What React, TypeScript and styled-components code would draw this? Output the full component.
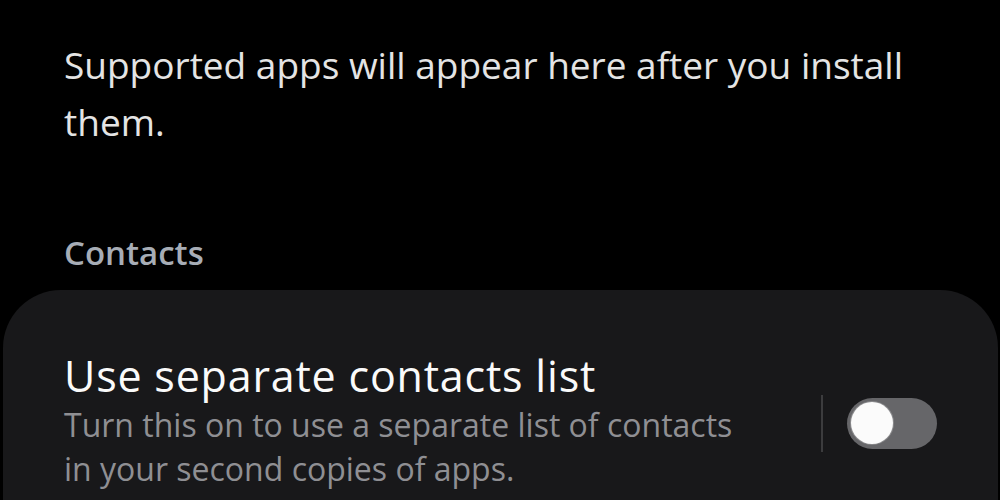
import React, { useState } from "react";
import styled, { createGlobalStyle } from "styled-components";

const GlobalStyle = createGlobalStyle`
  html, body {
    margin: 0;
    padding: 0;
    background: #000;
  }
  body {
    font-family: "Open Sans", "Noto Sans", sans-serif;
    overflow: hidden;
  }
`;

export default function App() {
  const [enabled, setEnabled] = useState(false);

  return (
    <Page>
      <GlobalStyle />
      <Intro>Supported apps will appear here after you install them.</Intro>
      <SectionTitle>Contacts</SectionTitle>
      <Card>
        <Row>
          <TextBlock>
            <RowTitle>Use separate contacts list</RowTitle>
            <RowSummary>
              Turn this on to use a separate list of contacts in your second
              copies of apps.
            </RowSummary>
          </TextBlock>
          <Divider />
          <Switch on={enabled} onClick={() => setEnabled(!enabled)}>
            <Thumb on={enabled} />
          </Switch>
        </Row>
      </Card>
    </Page>
  );
}

const Page = styled.div`
  width: 1000px;
  height: 500px;
  background: #000;
  display: flex;
  flex-direction: column;
  overflow: hidden;
`;

const Intro = styled.p`
  margin: 0;
  padding: 36px 60px 0 64px;
  color: #e4e4e4;
  font-size: 37px;
  line-height: 57px;
`;

const SectionTitle = styled.h3`
  margin: 0;
  padding: 81px 64px 0;
  color: #a7adb6;
  font-size: 33px;
  font-weight: 600;
  line-height: 44px;
`;

const Card = styled.div`
  margin: 15px 2px 0 3px;
  flex: 1;
  background: #18181a;
  border-radius: 58px 58px 0 0;
  padding: 60px 61px 0 61px;
`;

const Row = styled.div`
  display: flex;
  align-items: center;
`;

const TextBlock = styled.div`
  flex: 1;
  display: flex;
  flex-direction: column;
`;

const RowTitle = styled.div`
  color: #fafafa;
  font-size: 43px;
  line-height: 52px;
  letter-spacing: 0.8px;
`;

const RowSummary = styled.div`
  margin-top: 1px;
  color: #8f8f93;
  font-size: 32px;
  line-height: 44px;
  max-width: 680px;
`;

const Divider = styled.div`
  width: 2px;
  height: 57px;
  background: #3c3c3e;
  margin: 5px 24px 0 0;
`;

const Switch = styled.button<{ on: boolean }>`
  width: 90px;
  height: 51px;
  margin-top: 5px;
  border: none;
  border-radius: 26px;
  background: ${(p) => (p.on ? "#3e91ff" : "#666669")};
  padding: 0 4px;
  display: flex;
  align-items: center;
  justify-content: ${(p) => (p.on ? "flex-end" : "flex-start")};
  cursor: pointer;
`;

const Thumb = styled.span<{ on: boolean }>`
  width: 42px;
  height: 42px;
  border-radius: 50%;
  background: #fbfbfb;
  box-shadow: 0 0 0 1px #8a8a8c;
`;
